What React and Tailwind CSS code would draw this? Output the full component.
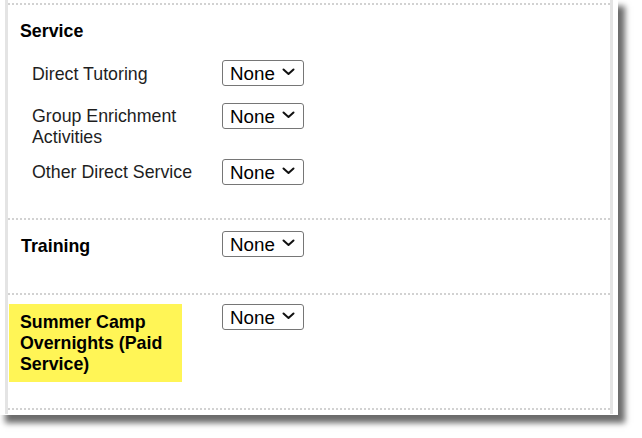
import React from "react";

function Chevron() {
  return (
    <svg width="13" height="8" viewBox="0 0 13 8" className="mt-[-3px]">
      <path d="M1.5 1.5 L6.5 6 L11.5 1.5" fill="none" stroke="#111" strokeWidth="2" strokeLinecap="round" strokeLinejoin="round" />
    </svg>
  );
}

function Sel() {
  return (
    <div className="w-[82px] h-[26px] shrink-0 border border-[#767676] rounded-[3px] bg-white flex items-center justify-between pl-[7px] pr-[8px] text-[18.8px] leading-[21px] text-black">
      <span>None</span>
      <Chevron />
    </div>
  );
}

export default function App() {
  return (
    <div className="w-[642px] h-[438px] bg-white overflow-hidden" style={{ fontFamily: '"Liberation Sans", Arial, sans-serif' }}>
      <div className="w-[618px] h-[415px] bg-white px-[5px] shadow-[6px_7px_6px_1px_rgba(0,0,0,0.58)]">
        <div className="h-[414px] border-x-[3px] border-[#e4e4e4] pt-[3px] text-[17.8px] leading-[21px]">
          <div className="h-0 border-t-2 border-dotted border-[#d2d2d2]" />
          <div className="h-[213px] pt-[16px]">
            <div className="pl-[12px] font-bold text-black">Service</div>
            <div className="flex items-start mt-[18px]">
              <div className="w-[214px] shrink-0 pl-[24px] pr-[8px] pt-[4px] text-[#1e1e1e]">Direct Tutoring</div>
              <Sel />
            </div>
            <div className="flex items-start mt-[17px]">
              <div className="w-[214px] shrink-0 pl-[24px] pr-[8px] pt-[3px] text-[#1e1e1e]">Group Enrichment Activities</div>
              <Sel />
            </div>
            <div className="flex items-start mt-[11px]">
              <div className="w-[214px] shrink-0 pl-[24px] pr-[8px] pt-[3px] text-[#1e1e1e]">Other Direct Service</div>
              <Sel />
            </div>
          </div>
          <div className="h-0 border-t-2 border-dotted border-[#d2d2d2]" />
          <div className="h-[73px] pt-[11px]">
            <div className="flex items-start">
              <div className="w-[214px] shrink-0 pl-[13px] pt-[5px] font-bold text-black">Training</div>
              <Sel />
            </div>
          </div>
          <div className="h-0 border-t-2 border-dotted border-[#d2d2d2]" />
          <div className="h-[113px] pt-[9px]">
            <div className="flex items-start">
              <div className="w-[214px] shrink-0 pl-[1px]">
                <div className="w-[173px] h-[78px] bg-[#fff556] pl-[11px] pt-[8px] font-bold text-black">
                  Summer Camp Overnights (Paid Service)
                </div>
              </div>
              <Sel />
            </div>
          </div>
          <div className="h-0 border-t-2 border-dotted border-[#d2d2d2]" />
        </div>
      </div>
    </div>
  );
}
